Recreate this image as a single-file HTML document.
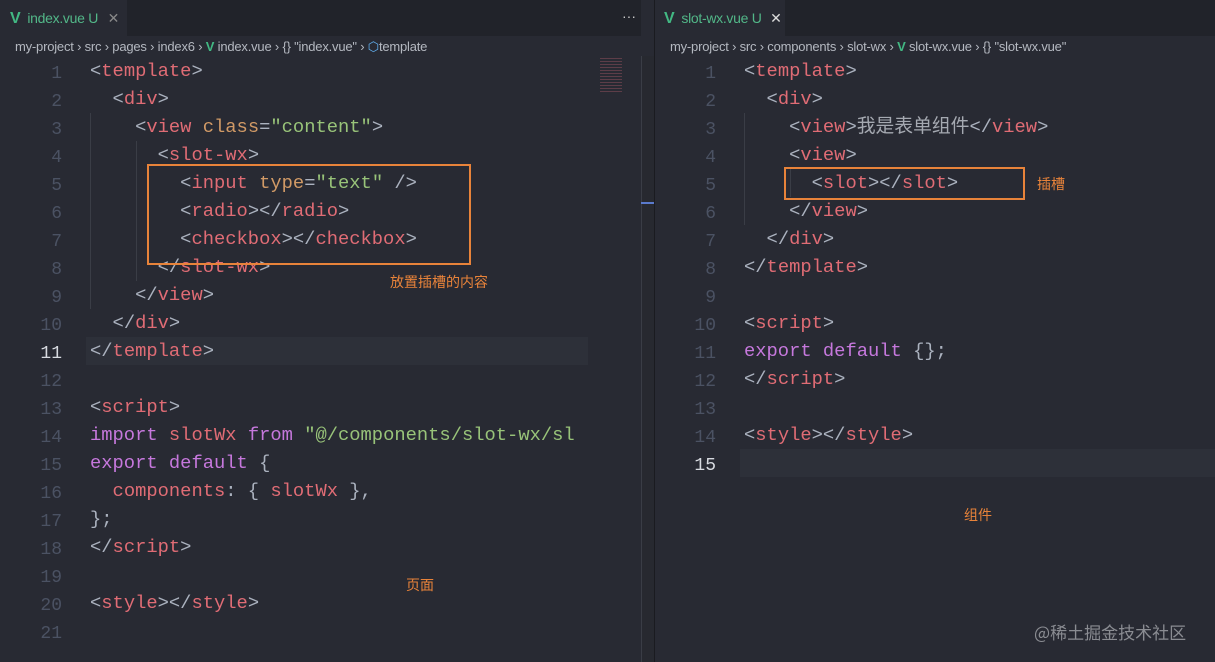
<!DOCTYPE html>
<html><head><meta charset="utf-8"><style>
*{margin:0;padding:0;box-sizing:border-box}
body{width:1215px;height:662px;background:#282a33;position:relative;overflow:hidden;font-family:"Liberation Sans","Noto Sans CJK SC",sans-serif}
.tabbar{position:absolute;top:0;height:36px;background:#21232a}
.tab{position:absolute;top:0;height:36px;background:#282a33;color:#52b788;font-size:14px;line-height:36px;padding-left:10px;letter-spacing:-0.3px;white-space:nowrap}
.tab .v{color:#42b883;font-weight:bold;margin-right:7px;font-size:16px}
.crumb{position:absolute;top:36px;height:22px;font-size:13px;color:#b4b8c0;line-height:22px;white-space:pre;letter-spacing:-0.2px}
.code{position:absolute;font-family:"Liberation Mono","Noto Sans CJK SC",monospace;font-size:18.8px;white-space:pre;color:#abb2bf}
.ln{position:absolute;font-family:"Liberation Mono",monospace;font-size:18px;color:#4b5263;text-align:right;width:30px}
.t{color:#e06c75}.p{color:#abb2bf}.a{color:#d19a66}.s{color:#98c379}.k{color:#c678dd}.cn{color:#a5a9b1}
.box{position:absolute;border:2px solid #e8833a}
.note{position:absolute;color:#e8833a;font-size:14px;font-family:"Noto Sans CJK SC",sans-serif}
.guide{position:absolute;width:1px;background:#3a3d46}
</style></head><body>
<div class="tabbar" style="left:0;width:641px"></div>
<div class="tabbar" style="left:655px;width:560px"></div>
<div class="tab" style="left:0;width:127px"><span class="v">V</span>index.vue <span style="color:#52b788">U</span> <span style="color:#888;margin-left:6px">✕</span></div>
<div style="position:absolute;left:622px;top:8px;color:#ccc;font-size:14px">···</div>
<div class="tab" style="left:655px;width:130px;padding-left:9px"><span class="v">V</span>slot-wx.vue <span>U</span> <span style="color:#ddd;margin-left:5px">✕</span></div>
<div class="crumb" style="left:15px">my-project › src › pages › index6 › <span style="color:#42b883;font-weight:bold">V</span> index.vue › {} "index.vue" › <span style="color:#61afef">⬡</span>template</div>
<div class="crumb" style="left:670px">my-project › src › components › slot-wx › <span style="color:#42b883;font-weight:bold">V</span> slot-wx.vue › {} "slot-wx.vue"</div>
<div style="position:absolute;left:641px;top:56px;width:13px;height:606px;background:#272930;border-left:1px solid #3a3d46"></div>
<div style="position:absolute;left:641px;top:202px;width:13px;height:2px;background:#5a7acd"></div>
<div style="position:absolute;left:654px;top:0;width:1px;height:662px;background:#1a1b20"></div>
<div style="position:absolute;left:86px;top:337px;width:502px;height:28px;background:#2d3039"></div>
<div style="position:absolute;left:740px;top:449px;width:475px;height:28px;background:#2d3039"></div>
<div class="guide" style="left:90px;top:113px;height:196px"></div>
<div class="guide" style="left:136px;top:141px;height:140px"></div>
<div class="guide" style="left:744px;top:113px;height:112px"></div>
<div class="guide" style="left:790px;top:169px;height:28px"></div>

<div class="ln" style="left:32px;top:60px;line-height:28px">1<br>2<br>3<br>4<br>5<br>6<br>7<br>8<br>9<br>10<br><span style="color:#d7dae0">11</span><br>12<br>13<br>14<br>15<br>16<br>17<br>18<br>19<br>20<br>21</div>
<div class="code" style="left:90px;top:57px;line-height:28px"><span class="p">&lt;</span><span class="t">template</span><span class="p">&gt;</span>
  <span class="p">&lt;</span><span class="t">div</span><span class="p">&gt;</span>
    <span class="p">&lt;</span><span class="t">view</span> <span class="a">class</span>=<span class="s">"content"</span><span class="p">&gt;</span>
      <span class="p">&lt;</span><span class="t">slot-wx</span><span class="p">&gt;</span>
        <span class="p">&lt;</span><span class="t">input</span> <span class="a">type</span>=<span class="s">"text"</span> <span class="p">/&gt;</span>
        <span class="p">&lt;</span><span class="t">radio</span><span class="p">&gt;&lt;/</span><span class="t">radio</span><span class="p">&gt;</span>
        <span class="p">&lt;</span><span class="t">checkbox</span><span class="p">&gt;&lt;/</span><span class="t">checkbox</span><span class="p">&gt;</span>
      <span class="p">&lt;/</span><span class="t">slot-wx</span><span class="p">&gt;</span>
    <span class="p">&lt;/</span><span class="t">view</span><span class="p">&gt;</span>
  <span class="p">&lt;/</span><span class="t">div</span><span class="p">&gt;</span>
<span class="p">&lt;/</span><span class="t">template</span><span class="p">&gt;</span>

<span class="p">&lt;</span><span class="t">script</span><span class="p">&gt;</span>
<span class="k">import</span> <span class="t">slotWx</span> <span class="k">from</span> <span class="s">"@/components/slot-wx/sl</span>
<span class="k">export</span> <span class="k">default</span> {
  <span class="t">components</span>: { <span class="t">slotWx</span> },
};
<span class="p">&lt;/</span><span class="t">script</span><span class="p">&gt;</span>

<span class="p">&lt;</span><span class="t">style</span><span class="p">&gt;&lt;/</span><span class="t">style</span><span class="p">&gt;</span>
</div>
<div style="position:absolute;left:590px;top:56px;width:50px;height:606px;background:#282a33"></div>
<div style="position:absolute;left:600px;top:58px;width:22px;height:36px;opacity:.35;background:repeating-linear-gradient(#c06070 0 1px,transparent 1px 3px)"></div>

<div class="ln" style="left:686px;top:60px;line-height:28px;color:#4b5263">1<br>2<br>3<br>4<br>5<br>6<br>7<br>8<br>9<br>10<br>11<br>12<br>13<br>14<br><span style="color:#d7dae0">15</span></div>
<div class="code" style="left:744px;top:57px;line-height:28px"><span class="p">&lt;</span><span class="t">template</span><span class="p">&gt;</span>
  <span class="p">&lt;</span><span class="t">div</span><span class="p">&gt;</span>
    <span class="p">&lt;</span><span class="t">view</span><span class="p">&gt;</span><span class="cn">我是表单组件</span><span class="p">&lt;/</span><span class="t">view</span><span class="p">&gt;</span>
    <span class="p">&lt;</span><span class="t">view</span><span class="p">&gt;</span>
      <span class="p">&lt;</span><span class="t">slot</span><span class="p">&gt;&lt;/</span><span class="t">slot</span><span class="p">&gt;</span>
    <span class="p">&lt;/</span><span class="t">view</span><span class="p">&gt;</span>
  <span class="p">&lt;/</span><span class="t">div</span><span class="p">&gt;</span>
<span class="p">&lt;/</span><span class="t">template</span><span class="p">&gt;</span>

<span class="p">&lt;</span><span class="t">script</span><span class="p">&gt;</span>
<span class="k">export</span> <span class="k">default</span> {};
<span class="p">&lt;/</span><span class="t">script</span><span class="p">&gt;</span>

<span class="p">&lt;</span><span class="t">style</span><span class="p">&gt;&lt;/</span><span class="t">style</span><span class="p">&gt;</span>
</div>
<div class="box" style="left:147px;top:164px;width:324px;height:101px"></div>
<div class="note" style="left:390px;top:272px">放置插槽的内容</div>
<div class="note" style="left:406px;top:575px">页面</div>
<div class="box" style="left:784px;top:167px;width:241px;height:33px"></div>
<div class="note" style="left:1037px;top:174px">插槽</div>
<div class="note" style="left:964px;top:505px">组件</div>
<div style="position:absolute;left:1034px;top:619px;color:#8a8c92;font-size:17px;font-family:'Noto Sans CJK SC',sans-serif">@稀土掘金技术社区</div>
</body></html>
